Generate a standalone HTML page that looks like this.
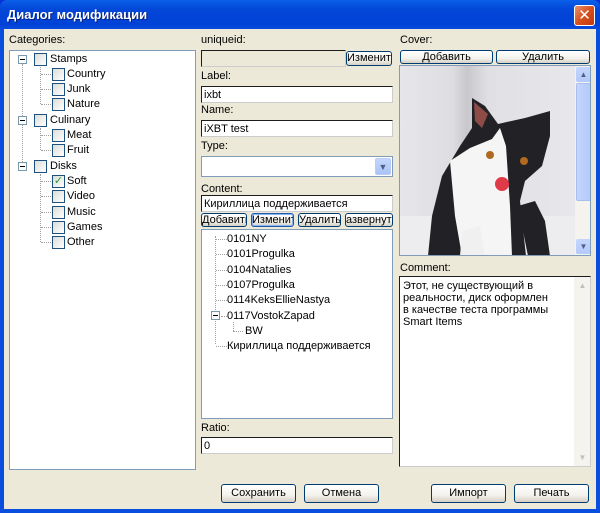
<!DOCTYPE html>
<html><head><meta charset="utf-8"><style>
*{margin:0;padding:0;box-sizing:border-box}
body{width:600px;height:513px;overflow:hidden;font-family:Tahoma,"Liberation Sans","DejaVu Sans",sans-serif;font-size:11px;color:#000;background:#0831d9}
.win{position:absolute;left:0;top:0;width:600px;height:513px;background:linear-gradient(#0a5fe8,#0346d8 10px,#0042d6 25px,#0a4ee0 30px);border-radius:7px 7px 0 0}
.title{position:absolute;left:7px;top:7px;color:#fff;font-weight:bold;font-size:13px;text-shadow:1px 1px #0a1f7a}
.close{position:absolute;left:574px;top:5px;width:21px;height:21px;border:1px solid #fff;border-radius:3px;background:linear-gradient(135deg,#e8926b,#d6501f 50%,#c2360a);color:#fff;font-weight:bold;font-size:15px;line-height:19px;text-align:center}
.client{position:absolute;left:4px;top:29px;width:592px;height:480px;background:#ece9d8}
.a{position:absolute}
.lbl{position:absolute;font-size:11px}
.box{position:absolute;background:#fff;border:1px solid #7f9db9}
.inp{position:absolute;background:#fff;border:1px solid #1c1c1c;border-right-color:#ccc;border-bottom-color:#ccc;padding:2px 2px 0;font-size:11px;white-space:nowrap;overflow:hidden}
.btn{position:absolute;border:1px solid #003c74;border-radius:3px;background:linear-gradient(#fff,#f3f2ec 60%,#d6d0c5);text-align:center;font-size:11px;line-height:13px;white-space:nowrap;overflow:hidden}
.t{position:absolute;white-space:nowrap;font-size:11px}
.cb{position:absolute;width:13px;height:13px;border:1px solid #1c5180;background:linear-gradient(135deg,#dcdcd7,#fff)}
.pm{position:absolute;width:9px;height:9px;border:1px solid #7a99ad;background:#fff}
.pm:after{content:"";position:absolute;left:1px;top:3px;width:5px;height:1px;background:#000}
.dh{position:absolute;border-top:1px dotted #a0a0a0;height:0}
.dv{position:absolute;border-left:1px dotted #a0a0a0;width:0}
</style></head><body>
<div class="win">
<div class="title">Диалог модификации</div>
<div class="close">✕</div>
<div class="client"></div>

<div class="lbl" style="left:9px;top:34px">Categories:</div>
<div class="box" style="left:9px;top:50px;width:187px;height:420px"></div>
<div class="dv" style="left:22px;top:64px;height:102px"></div>
<div class="pm" style="left:18px;top:55px"></div>
<div class="cb" style="left:34px;top:53px"></div><div class="t" style="left:50px;top:53px">Stamps</div>
<div class="dv" style="left:40px;top:67px;height:37px"></div>
<div class="dh" style="left:41px;top:74px;width:10px"></div><div class="cb" style="left:52px;top:68px"></div><div class="t" style="left:67px;top:68px">Country</div>
<div class="dh" style="left:41px;top:89px;width:10px"></div><div class="cb" style="left:52px;top:83px"></div><div class="t" style="left:67px;top:83px">Junk</div>
<div class="dh" style="left:41px;top:104px;width:10px"></div><div class="cb" style="left:52px;top:98px"></div><div class="t" style="left:67px;top:98px">Nature</div>
<div class="pm" style="left:18px;top:116px"></div>
<div class="cb" style="left:34px;top:114px"></div><div class="t" style="left:50px;top:114px">Culinary</div>
<div class="dv" style="left:40px;top:128px;height:22px"></div>
<div class="dh" style="left:41px;top:135px;width:10px"></div><div class="cb" style="left:52px;top:129px"></div><div class="t" style="left:67px;top:129px">Meat</div>
<div class="dh" style="left:41px;top:150px;width:10px"></div><div class="cb" style="left:52px;top:144px"></div><div class="t" style="left:67px;top:144px">Fruit</div>
<div class="pm" style="left:18px;top:162px"></div>
<div class="cb" style="left:34px;top:160px"></div><div class="t" style="left:50px;top:160px">Disks</div>
<div class="dv" style="left:40px;top:174px;height:68px"></div>
<div class="dh" style="left:41px;top:181px;width:10px"></div><div class="cb" style="left:52px;top:175px;color:#21a121;font-size:11px;line-height:11px;text-align:center;font-weight:bold">✓</div><div class="t" style="left:67px;top:175px">Soft</div>
<div class="dh" style="left:41px;top:196px;width:10px"></div><div class="cb" style="left:52px;top:190px"></div><div class="t" style="left:67px;top:190px">Video</div>
<div class="dh" style="left:41px;top:212px;width:10px"></div><div class="cb" style="left:52px;top:206px"></div><div class="t" style="left:67px;top:206px">Music</div>
<div class="dh" style="left:41px;top:227px;width:10px"></div><div class="cb" style="left:52px;top:221px"></div><div class="t" style="left:67px;top:221px">Games</div>
<div class="dh" style="left:41px;top:242px;width:10px"></div><div class="cb" style="left:52px;top:236px"></div><div class="t" style="left:67px;top:236px">Other</div>

<div class="lbl" style="left:201px;top:34px">uniqueid:</div>
<div class="inp" style="left:201px;top:50px;width:145px;height:17px;background:#ece9d8"></div>
<div class="btn" style="left:346px;top:51px;width:46px;height:15px">Изменить</div>
<div class="lbl" style="left:201px;top:70px">Label:</div>
<div class="inp" style="left:201px;top:86px;width:192px;height:17px">ixbt</div>
<div class="lbl" style="left:201px;top:104px">Name:</div>
<div class="inp" style="left:201px;top:120px;width:192px;height:17px">iXBT test</div>
<div class="lbl" style="left:201px;top:140px">Type:</div>
<div class="box" style="left:201px;top:156px;width:192px;height:21px"></div>
<div class="a" style="left:375px;top:158px;width:16px;height:17px;border-radius:2px;background:linear-gradient(#c5d5fd,#a9c3f7);border:1px solid #b9cdf7;color:#4d6185;font-size:9px;text-align:center;line-height:16px">▼</div>
<div class="lbl" style="left:201px;top:183px">Content:</div>
<div class="inp" style="left:201px;top:195px;width:192px;height:17px">Кириллица поддерживается</div>
<div class="btn" style="left:201px;top:213px;width:46px;height:14px;text-align:left">Добавить</div>
<div class="btn" style="left:251px;top:213px;width:43px;height:14px;border-color:#1e5ba8;box-shadow:inset 0 0 0 1px #8cb4f2">Изменить</div>
<div class="btn" style="left:298px;top:213px;width:43px;height:14px">Удалить</div>
<div class="btn" style="left:345px;top:213px;width:48px;height:14px">азвернуть</div>
<div class="box" style="left:201px;top:229px;width:192px;height:190px"></div>
<div class="dv" style="left:215px;top:236px;height:108px"></div>
<div class="dh" style="left:216px;top:239px;width:11px"></div><div class="t" style="left:227px;top:233px">0101NY</div>
<div class="dh" style="left:216px;top:254px;width:11px"></div><div class="t" style="left:227px;top:248px">0101Progulka</div>
<div class="dh" style="left:216px;top:270px;width:11px"></div><div class="t" style="left:227px;top:264px">0104Natalies</div>
<div class="dh" style="left:216px;top:285px;width:11px"></div><div class="t" style="left:227px;top:279px">0107Progulka</div>
<div class="dh" style="left:216px;top:300px;width:11px"></div><div class="t" style="left:227px;top:294px">0114KeksEllieNastya</div>
<div class="pm" style="left:211px;top:311px"></div><div class="dh" style="left:221px;top:316px;width:6px"></div><div class="t" style="left:227px;top:310px">0117VostokZapad</div>
<div class="dv" style="left:233px;top:322px;height:9px"></div><div class="dh" style="left:233px;top:331px;width:10px"></div><div class="t" style="left:245px;top:325px">BW</div>
<div class="dh" style="left:216px;top:346px;width:11px"></div><div class="t" style="left:227px;top:340px">Кириллица поддерживается</div>
<div class="lbl" style="left:201px;top:422px">Ratio:</div>
<div class="inp" style="left:201px;top:437px;width:192px;height:17px">0</div>

<div class="lbl" style="left:400px;top:34px">Cover:</div>
<div class="btn" style="left:400px;top:50px;width:93px;height:14px">Добавить</div>
<div class="btn" style="left:496px;top:50px;width:94px;height:14px">Удалить</div>
<div class="box" style="left:399px;top:65px;width:192px;height:191px;background:#e6e6ea;overflow:hidden">
<svg width="176" height="190" style="position:absolute;left:0;top:0">
<defs><linearGradient id="bg" x1="0" x2="1"><stop offset="0" stop-color="#e6e6ea"/><stop offset="0.3" stop-color="#dedee2"/><stop offset="0.38" stop-color="#c8c8cc"/><stop offset="0.5" stop-color="#e0e0e4"/><stop offset="1" stop-color="#e8e8ec"/></linearGradient></defs>
<rect width="176" height="190" fill="url(#bg)"/>
<rect x="0" y="150" width="176" height="40" fill="#ededf0"/>
<path d="M28 190 L32 150 L42 110 L60 80 L72 62 L72 32 L85 40 L98 58 L125 52 L150 45 L150 70 L142 100 L125 115 L120 135 L126 190 Z" fill="#222226"/>
<path d="M50 95 L70 82 L92 73 L100 62 L106 80 L108 110 L110 140 L112 190 L62 190 L55 150 Z" fill="#f5f5f5"/>
<path d="M74 36 L88 48 L82 62 L75 55 Z" fill="#8e4c46"/>
<circle cx="90" cy="89" r="4" fill="#b06a20"/><circle cx="124" cy="95" r="4" fill="#b06a20"/>
<circle cx="102" cy="118" r="7" fill="#e03a48"/>
<path d="M118 140 L135 135 L145 155 L150 190 L128 190 Z" fill="#222226"/>
<path d="M62 165 L80 160 L85 190 L60 190 Z" fill="#f0f0f0"/>
</svg>
<div class="a" style="left:175px;top:0;width:16px;height:189px;background:#f4f3ee"></div>
<div class="a" style="left:176px;top:1px;width:15px;height:15px;border-radius:2px;background:linear-gradient(#c5d5fd,#b4c9fb);color:#4d6185;font-size:8px;text-align:center;line-height:15px">▲</div>
<div class="a" style="left:176px;top:17px;width:15px;height:118px;border-radius:2px;background:linear-gradient(90deg,#c5d5fd,#b4c9fb);border:1px solid #a8bef0"></div>
<div class="a" style="left:176px;top:173px;width:15px;height:15px;border-radius:2px;background:linear-gradient(#c5d5fd,#b4c9fb);color:#4d6185;font-size:8px;text-align:center;line-height:15px">▼</div>
</div>
<div class="lbl" style="left:400px;top:262px">Comment:</div>
<div class="box" style="left:399px;top:276px;width:192px;height:191px;padding:3px 3px;line-height:12px;border-color:#1c1c1c #ccc #ccc #1c1c1c">Этот, не существующий в<br>реальности, диск оформлен<br>в качестве теста программы<br>Smart Items
<div class="a" style="left:174px;top:0;width:16px;height:189px;background:#f4f3ee"></div>
<div class="a" style="left:175px;top:1px;width:15px;height:15px;color:#c0c0c0;font-size:8px;text-align:center;line-height:15px">▲</div>
<div class="a" style="left:175px;top:173px;width:15px;height:15px;color:#c0c0c0;font-size:8px;text-align:center;line-height:15px">▼</div>
</div>

<div class="btn" style="left:221px;top:484px;width:75px;height:19px;line-height:17px">Сохранить</div>
<div class="btn" style="left:304px;top:484px;width:75px;height:19px;line-height:17px">Отмена</div>
<div class="btn" style="left:431px;top:484px;width:75px;height:19px;line-height:17px">Импорт</div>
<div class="btn" style="left:514px;top:484px;width:75px;height:19px;line-height:17px">Печать</div>
</div>
</body></html>
